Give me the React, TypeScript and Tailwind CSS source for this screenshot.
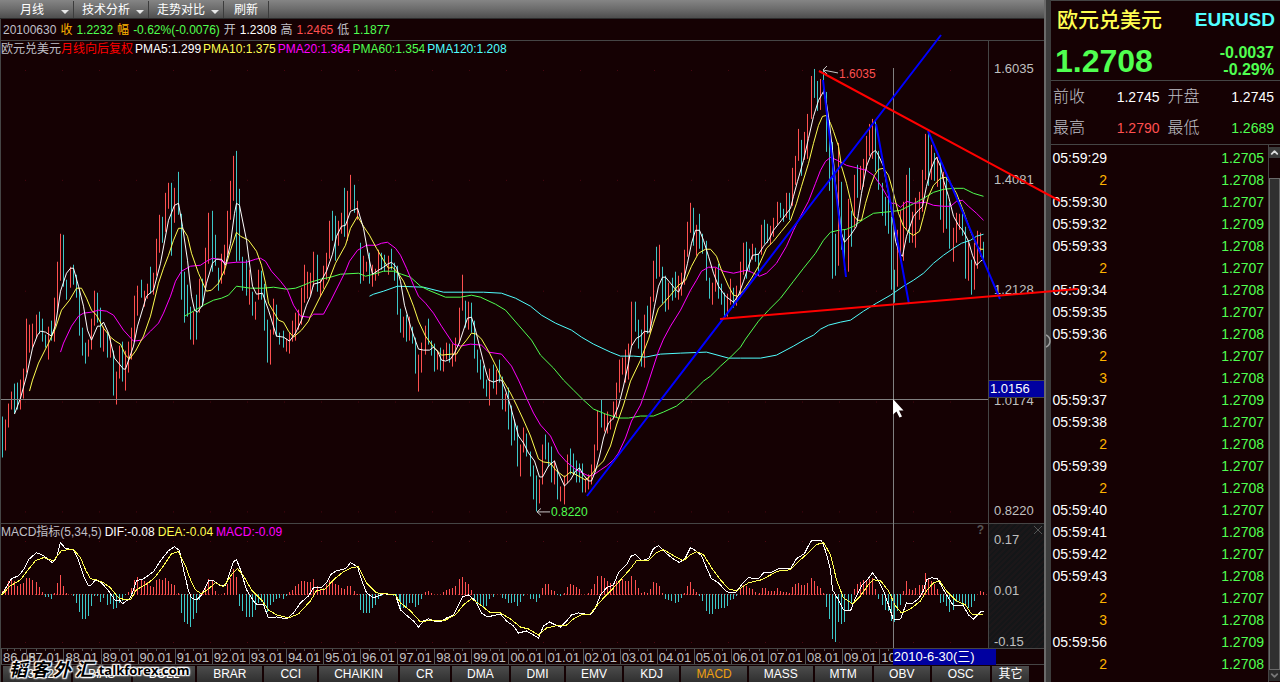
import { ChevronDown, ChevronUp } from "lucide-react";

type Block = { ox: number; oy: number; data: string };
type Pt = [number, number];

/* Chart data: each block holds points in thirds of a unit, counted from its own origin. */

const PRICE_BARS: Block[] = [
  {
    ox: 0,
    oy: 140,
    data: "d8,830,954 u16,840,933 u25,792,864 u34,756,810 d43,731,822 d52,729,809 u61,720,809 u70,687,777 u79,537,699 u88,555,638 u97,552,624 u109,525,594 d118,516,582 d127,537,606 d136,585,624 u145,561,660 d154,543,603 u163,474,606 u172,366,513 u181,282,423 d190,285,441 d199,420,480 u211,381,444 d220,375,435 d229,405,474 d238,447,588 d247,564,648 d256,609,672 u265,600,651 u274,537,630 u283,453,558 d292,459,549 d301,504,624 u310,561,636 d322,576,654 u331,594,654 d340,633,768 u349,696,795 u358,618,717 d367,606,726 u376,633,753 u385,606,699 u394,564,660 u403,468,606 u412,438,528 d424,420,474 u433,453,500 u442,432,477 d451,381,462 u460,399,465 u469,297,408 u478,225,339 d487,231,309 u496,159,276 u505,129,207 d514,128,348 u523,144,249 d535,96,226 d544,222,480 d553,396,549 d562,435,531 d571,501,600 u580,516,615 d589,465,600 u598,417,519 d607,417,501 u616,324,447 u625,219,372 d637,213,396 d646,285,378 d655,384,453 u664,342,432 u673,315,405 u682,213,345 u691,123,240 u700,48,183 d709,33,366 d718,147,362 d727,351,453 d739,360,468 u748,390,495 d757,456,528 u766,486,540 u775,390,480 d784,393,480 d793,432,573 d802,540,669 u811,570,675 u820,477,585 d829,495,591 d838,579,615 d850,573,624 u859,597,636 u868,579,642 u877,543,606 u886,519,603 u895,510,570 u904,444,555 u913,375,489 u922,396,477 u931,399,465 u940,336,441 d952,345,456 u961,420,471 u970,378,447 u979,339,420",
  },
  {
    ox: 310,
    oy: 160,
    data: "u58,183,297 d67,153,243 d76,168,303 u85,183,258 u94,159,222 d103,84,231 u112,93,243 u121,45,150 d133,75,159 u142,123,180 d151,249,372 u160,288,363 u169,306,336 d178,279,372 u187,315,381 u196,327,363 u205,270,348 d214,279,330 d223,285,335 u235,288,345 d244,267,330 d253,309,363 d262,318,465 d271,447,519 u280,470,534 d289,465,546 u298,471,543 d307,500,552 d316,534,642 u325,585,696 u334,549,639 u346,498,585 d355,477,555 d364,543,588 d373,552,636 u382,573,630 d391,564,633 u400,570,636 u409,549,600 d418,552,609 u427,552,621 u436,534,606 u448,444,552 u457,345,453 d466,423,504 u475,426,510 d484,429,519 d493,483,597 d502,570,639 d511,600,660 d520,618,687 d529,660,711 u538,627,738 d550,615,687 u559,630,705 d568,600,669 d577,651,750 u586,702,756 d595,684,810 d604,738,858 d613,780,843 d622,798,921 u631,855,951 u640,804,879 d649,822,891 d661,876,951 d670,918,1020 d679,948,1056 u688,960,1032 u697,855,975 d706,825,900 d715,850,920 d724,860,970 u733,903,975 d742,933,1020 u751,980,1026 u763,948,1035 u772,885,972 d781,867,945 d790,882,945 d799,903,969 d808,912,969 d817,912,999 u826,957,999 u835,945,990 u844,915,975 u853,855,936 u862,753,873 d874,720,804 u883,762,815 u892,756,822 u901,774,810 u910,726,780 u919,670,775 u928,600,700 u937,594,645 u946,570,669 u955,552,660 u964,426,558 d976,426,516",
  },
  {
    ox: 480,
    oy: 300,
    data: "d475,60,147 d484,90,201 u493,45,204 d502,18,102",
  },
  {
    ox: 600,
    oy: 60,
    data: "u151,710,819 u160,603,726 d169,561,657 u178,555,651 d187,621,732 d196,648,756 u205,670,750 d217,654,723 d226,636,714 u235,648,720 u244,640,708 u253,570,675 u262,486,591 u271,429,519 d280,444,558 u289,495,588 d298,462,567 d307,522,582 d319,543,663 d328,654,717 u337,669,735 u346,624,696 d355,612,717 d364,672,735 d373,699,777 u382,702,771 u391,657,735 d400,684,744 u409,678,738 u421,606,708 u430,549,645 d439,546,657 d448,567,633 u457,553,600 d466,564,606 d475,582,648 u484,495,585 d493,480,552 d502,492,549 u511,498,555 u520,474,531 u532,426,495 d541,429,474 d550,447,486 u559,400,474 d568,399,480 u577,324,438 u586,289,375 u595,207,303 d604,240,348 u613,216,300 u622,162,297 u634,48,177 d643,27,114 d652,63,153 u661,58,150 d670,27,102 d679,96,276 d688,180,393",
  },
  {
    ox: 780,
    oy: 30,
    data: "d157,336,747 d166,612,738 u175,339,708 d184,456,660 d193,600,720 u205,507,726 d214,543,651 u223,435,594 d232,405,504 u241,408,480 u250,387,470 u259,318,420 u268,282,378 u277,267,387 d286,272,426 d295,363,480 d307,458,558 d316,500,588 d325,480,612 d334,560,780 d343,720,820 u352,600,771 u361,540,690 u370,516,693 u379,435,600 d388,414,639 u397,546,640 u406,504,654 u418,486,570 u427,420,546 u436,312,450 d445,303,468 u454,345,450 d463,370,453 u472,380,470 d481,393,570 u490,426,609 d499,440,597 d508,520,657 u520,594,696 u529,549,639 u538,552,600 d547,552,618 d556,591,747 u565,640,753 d574,690,795 u583,640,780 u592,603,717 u601,609,680 d610,636,690",
  },
];

const PMA5: Block[] = [
  {
    ox: 0,
    oy: 140,
    data: "43,822 61,775 79,710 97,625 112,585 121,574 136,576 154,590 166,555 181,455 199,400 211,384 220,386 235,440 250,500 262,570 273,600 292,558 301,558 311,548 325,580 343,655 370,687 377,687 400,620 412,560 440,470 460,450 480,370 505,240 523,195 535,189 547,260 562,360 575,470 583,510 591,518 607,495 620,430 637,370 650,357 664,357 676,375 691,310 703,220 710,189 718,197 739,300 757,440 768,463 787,460 805,510 830,590 850,592 868,604 886,580 904,540 920,495",
  },
  {
    ox: 310,
    oy: 160,
    data: "0,410 10,372 30,368 50,335 66,283 80,230 94,200 106,197 122,153 142,145 160,205 175,290 187,342 205,330 220,322 232,312 245,308 258,322 270,365 283,435 300,500 313,535 325,568 340,572 358,572 370,563 382,575 395,600 407,605 420,598 433,580 448,548 460,510 472,475 484,471 496,510 511,570 525,630 535,660 550,668 565,661 575,661 586,690 601,740 625,830 640,850 655,880 672,905 688,953 697,951 715,920 733,905 745,940 763,980 780,960 795,935 808,925 820,945 835,965 845,965 857,935 868,890 880,835 895,790 910,775 925,740 940,680 955,610 965,560 978,535",
  },
  {
    ox: 600,
    oy: 60,
    data: "120,828 133,815 148,818 155,790 163,740 175,680 187,652 195,653 210,670 223,685 235,697 250,665 262,610 275,550 287,512 298,510 310,540 325,590 340,640 355,680 375,708 400,726 415,705 430,665 445,620 458,585 475,583 490,560 505,540 520,510 545,480 570,445 580,410 592,365 610,300 625,235 640,170 655,120 670,93 680,130 688,190 697,270 706,370 716,440 725,520 734,548 750,525 768,500 775,460 785,400 800,320 815,280 825,270 835,285 850,320 860,370 870,430 880,500",
  },
  {
    ox: 780,
    oy: 30,
    data: "345,635 358,670 367,678 380,620 400,560 415,540 427,530 440,470 450,420 462,392 470,381 480,410 490,450 505,500 520,560 535,585 550,605 565,635 578,675 590,707 600,695 609,688",
  },
];

const PMA10: Block[] = [
  {
    ox: 0,
    oy: 140,
    data: "88,755 97,720 115,670 145,610 165,565 185,510 208,480 230,444 245,446 260,475 275,510 290,525 310,565 330,593 345,605 360,612 375,645 388,657 405,635 430,590 452,530 475,430 490,385 505,345 520,300 535,265 547,265 562,290 575,340 595,400 618,455 635,452 655,430 672,390 690,330 709,278 720,288 745,300 770,335 785,375 795,430 805,490 835,540 850,548 865,575 880,593 905,570 925,545",
  },
  {
    ox: 310,
    oy: 160,
    data: "0,468 30,410 55,365 75,310 105,255 122,205 142,170 160,200 178,225 200,265 220,300 235,325 248,322 262,337 280,365 295,400 310,440 325,485 345,530 370,562 395,587 425,583 440,582 455,560 470,540 485,521 500,523 515,537 535,575 555,615 575,655 600,700 620,735 640,780 660,830 685,897 700,908 720,910 735,930 763,952 780,937 800,945 825,960 840,950 860,925 880,905 900,860 920,795 940,735 960,665",
  },
  {
    ox: 600,
    oy: 60,
    data: "120,900 145,838 160,790 175,745 190,730 210,705 235,675 255,660 275,620 295,580 315,568 330,568 350,590 365,630 385,680 400,707 412,710 430,690 455,655 475,620 500,565 520,545 545,515 570,480 590,430 605,380 625,310 640,250 655,195 668,170 679,165 690,190 700,215 715,260 725,320 738,370 750,420 760,465 772,482 783,480 795,430 810,380 822,345 835,328 850,325 865,345 880,400",
  },
  {
    ox: 780,
    oy: 30,
    data: "355,550 370,590 385,608 400,616 418,605 430,560 445,500 460,465 480,445 495,441 510,460 530,490 550,545 570,605 590,645 600,657 609,658",
  },
];

const PMA20: Block[] = [
  {
    ox: 0,
    oy: 140,
    data: "181,638 190,610 215,560 235,528 250,520 275,518 295,511 320,515 340,525 370,572 400,603 425,600 450,573 475,550 490,520 510,470 525,425 545,395 570,378 600,376 620,365 637,356 655,357 680,371 710,367 740,368 765,357 780,355 795,365 815,395 840,425 862,450 880,495 900,528 925,533",
  },
  {
    ox: 310,
    oy: 160,
    data: "0,472 10,463 41,463 60,425 90,365 105,335 118,305 142,270 170,257 200,257 215,250 232,247 255,265 270,285 290,325 310,375 325,410 345,430 370,460 395,500 430,553 450,558 480,553 515,557 535,578 575,584 605,620 625,660 650,715 670,760 690,797 720,830 745,880 770,908 800,930 835,948 850,945 870,930 890,920 910,900 925,880 945,835 965,785 990,735",
  },
  {
    ox: 600,
    oy: 60,
    data: "140,985 175,875 190,838 210,800 240,750 270,690 290,660 305,633 325,623 345,623 370,633 400,640 440,630 455,637 477,650 500,640 530,610 560,560 580,510 600,470 625,425 645,370 660,330 675,305 690,293 712,300 740,315 775,325 800,330 820,345 845,380 860,405 875,430",
  },
  {
    ox: 780,
    oy: 30,
    data: "345,520 362,532 380,515 400,520 435,517 460,527 490,528 510,530 530,515 548,510 565,530 590,550 609,570",
  },
];

const PMA60: Block[] = [
  {
    ox: 0,
    oy: 140,
    data: "553,530 580,515 610,495 640,480 665,476 685,465 710,438 750,445 790,445 820,441 860,448 885,446 910,435",
  },
  {
    ox: 310,
    oy: 160,
    data: "0,366 30,358 60,352 90,343 145,341 165,348 190,343 220,335 250,335 275,342 300,353 330,380 355,392 405,411 450,411 485,405 510,411 555,433 585,450 625,495 665,540 690,585 730,625 760,660 790,690 820,722 850,748 885,762 925,776 955,774",
  },
  {
    ox: 480,
    oy: 300,
    data: "480,350 521,350 550,337 590,320 620,295 650,265 670,243 690,230 720,200 750,173 780,142",
  },
  {
    ox: 600,
    oy: 60,
    data: "435,838 475,785 505,750 540,715 580,665 610,625 645,580 670,540 690,518 715,510 740,508 760,500 790,478 820,460 850,457 880,454",
  },
  {
    ox: 780,
    oy: 30,
    data: "360,540 390,525 430,505 460,488 490,477 520,475 550,475 580,490 609,500",
  },
];

const PMA120: Block[] = [
  {
    ox: 310,
    oy: 160,
    data: "178,409 190,403 220,395 262,380 340,382 400,397 520,397 575,400 615,415 660,438 695,465 735,490 785,510 815,533 850,552 900,577 930,588",
  },
  { ox: 480, oy: 300, data: "460,170 495,172 540,163 600,160 680,157 745,174" },
  {
    ox: 600,
    oy: 60,
    data: "420,896 480,894 530,885 580,858 615,838 640,825 660,808 685,795 720,787 750,780 790,755 830,730",
  },
  {
    ox: 780,
    oy: 30,
    data: "330,795 370,770 400,750 430,730 460,700 490,677 520,655 545,640 570,632 590,620 609,613",
  },
];

const MACD_BARS: Block[] = [
  {
    ox: 0,
    oy: 520,
    data: "u8,215 u16,211 u25,185 u34,180 u43,185 u52,200 u61,195 u70,191 u79,177 u88,178 u97,182 u109,190 u118,204 u127,220 d136,234 d145,234 d154,240 u163,222 u172,192 u181,168 u190,201 u199,222 d220,231 d229,252 d238,279 d247,300 d256,300 d265,291 d274,261 d283,232 d292,231 d301,249 d310,237 d322,258 d331,255 d340,270 d349,266 d358,252 d367,246 d376,229 u385,220 u394,207 u403,183 u412,174 u424,180 u433,186 u442,190 u451,201 u460,204 u469,182 u478,180 u487,184 u496,177 u505,186 u514,195 u523,198 u535,222 d544,282 d553,309 d562,316 d571,324 d580,300 d589,282 d598,243 u607,216 u616,201 u625,180 u637,185 u646,216 u673,222 u682,195 u691,177 u700,150 u709,175 d718,261 d727,276 d739,294 d748,294 d757,294 d766,273 d775,252 d784,249 d793,261 d802,279 d811,258 d820,249 d829,240 d838,237 d850,240 d859,231 u868,219 u877,212 u886,201 u895,195 u904,186 u913,186 u922,189 u931,189 u940,180 u952,200 u961,210 u970,208 u979,195 u988,184 u997,183 u1006,195 u1015,198 u1024,206 u1033,210 u1042,202 u1051,201 u1063,215 u1072,225 d1081,273 d1090,282 d1099,282 d1108,282 d1117,267 d1126,258 d1135,240 d1144,231 d1180,230 d1189,234 d1198,246",
  },
  {
    ox: 400,
    oy: 520,
    data: "d1,270 d10,267 d19,267 d28,252 d37,252 d46,264 d55,258 d64,240 u76,219 u85,216 u94,222 u130,219 u139,213 u148,211 u157,207 u166,201 u178,180 u187,174 u196,189 u205,195 u214,213 d223,243 d232,255 d241,261 d250,267 d259,261 d268,240 d280,234 d307,237 d316,240 d325,252 d334,252 d343,249 d352,261 d361,249 d370,231 d391,240 d400,240 d409,249 d418,237 u427,207 u436,195 u445,195 u454,213 u463,216 d472,228 d481,231 u493,222 u502,205 u511,195 u520,198 u529,204 u538,210 u565,222 u574,210 u583,195 u592,171 u604,171 u613,177 u622,186 u631,192 u640,195 u649,186 u658,183 u667,180 u676,185 u685,185 u694,171 u706,183 u715,207 u724,222 u733,219 u742,222 u751,210 u760,189 u769,192 u778,201 u787,222 d796,240 d805,243 d814,246 d826,252 d835,249 d844,236 u853,222 u862,201 u871,189 u880,210 u889,220 d898,231 d907,246 d919,276 d928,285 d937,285 d946,270 d955,270 d964,267 d973,266 d982,261 d991,243 d1000,240 d1009,231 u1021,207 u1030,198 u1039,200 u1048,207 u1057,210 u1066,219 u1078,222 u1087,207 u1096,207 u1105,216 u1114,216 u1123,216 u1132,207",
  },
  {
    ox: 780,
    oy: 520,
    data: "u1,216 u10,218 u19,219 u28,222 u37,204 u46,195 u55,192 u64,198 u73,198 u82,192 u94,177 u103,186 u112,201 u121,207 u130,222 d139,264 d148,300 d157,356 d166,366 d175,309 d184,315 d193,309 d205,276 d214,255 u223,210 u232,195 u241,188 u250,183 u259,183 u268,180 u277,177 u286,210 d295,240 d307,258 d316,272 d325,276 d334,306 d343,308 d352,275 d361,258 u370,216 u379,186 u388,210 u397,212 u406,207 u418,198 u427,198 u436,162 u445,180 u454,186 u463,195 u472,210 d481,252 d490,249 d499,261 d508,279 d520,273 d529,249 d538,246 d547,258 d556,261 d565,268 d574,264 d583,246 u601,216 u610,219",
  },
];

const DIF: Block[] = [
  {
    ox: 0,
    oy: 520,
    data: "5,225 35,177 55,170 70,150 85,122 110,100 130,110 145,122 157,129 170,115 182,71 195,87 220,92 232,115 250,170 265,198 275,197 287,180 305,190 325,215 347,245 358,240 368,253 390,235 410,185 430,177 460,158 480,125 505,93 523,83 537,95 550,150 565,215 575,235 590,240 605,225 625,184 640,185 660,200 675,198 690,155 700,128 709,121 720,150 740,210 765,253 790,255 805,295 830,291 860,298 880,280 900,250 925,230 940,205 965,205 978,190 990,167 1010,155 1035,148 1052,130 1072,141 1085,180 1100,220 1120,234 1150,224 1185,227",
  },
  {
    ox: 400,
    oy: 520,
    data: "0,270 25,293 40,305 55,322 70,305 85,297 100,305 120,307 140,295 160,285 175,255 187,232 205,226 225,245 245,280 262,292 300,283 320,305 340,320 355,340 380,333 400,345 415,356 430,320 447,308 465,317 482,323 500,305 515,285 535,280 570,287 585,265 600,225 620,205 640,197 655,160 680,135 695,108 706,105 725,125 745,118 760,88 775,79 795,100 815,115 837,131 855,115 870,86 885,93 905,110 920,145 935,178 955,190 980,217 1005,220 1025,195 1045,175 1075,177 1090,161 1110,160 1135,148",
  },
  {
    ox: 780,
    oy: 520,
    data: "0,148 32,148 50,118 73,103 85,80 95,65 125,65 135,95 150,150 158,210 175,240 190,270 210,273 225,235 245,200 262,180 277,160 295,185 310,215 325,255 340,300 362,297 378,250 395,253 415,237 430,215 440,180 455,175 472,177 490,210 505,235 520,258 550,260 565,285 580,298 600,277 609,277",
  },
];

const DEA: Block[] = [
  {
    ox: 0,
    oy: 520,
    data: "5,225 30,200 60,180 80,157 105,125 130,114 160,123 185,95 205,91 220,92 240,115 255,150 272,178 290,180 310,190 330,205 355,235 375,242 390,240 410,210 445,190 465,172 490,140 515,103 535,97 555,140 570,180 585,210 605,223 625,208 645,190 670,201 695,165 712,148 730,170 755,210 785,240 805,270 830,287 865,296 895,282 930,245 950,215 975,207 1000,180 1030,157 1055,144 1075,143 1100,190 1130,220 1185,227",
  },
  {
    ox: 400,
    oy: 520,
    data: "0,250 30,275 60,308 95,302 130,303 165,285 190,255 214,237 240,255 270,280 300,280 330,297 360,323 385,328 415,347 440,325 465,318 495,319 520,297 545,287 570,284 590,260 615,230 640,205 665,178 690,148 710,125 745,123 770,100 790,91 820,110 850,123 870,105 890,97 910,105 935,145 960,180 985,207 1010,214 1045,190 1085,180 1130,157",
  },
  {
    ox: 780,
    oy: 520,
    data: "0,154 32,151 60,122 85,100 110,77 130,71 150,105 170,180 190,235 217,254 240,230 262,200 280,180 300,185 325,215 345,260 365,280 390,267 420,245 440,215 460,190 477,185 500,215 530,245 555,255 575,282 590,286 609,283",
  },
];

const RED = "#ff5050";
const TEAL = "#3cc8c8";

function toPath(blocks: Block[]): string {
  const pts: Pt[] = blocks.flatMap((b) =>
    b.data.split(" ").map((p): Pt => {
      const [x, y] = p.split(",").map(Number);
      return [Math.floor(b.ox + x / 3) + 0.5, Math.floor(b.oy + y / 3) + 0.5];
    }),
  );
  return "M" + pts.map(([x, y]) => `${x} ${y}`).join("L");
}

function barPath(blocks: Block[], kind: "u" | "d", base?: number): string {
  return blocks
    .flatMap((b) =>
      b.data
        .split(" ")
        .filter((s) => s[0] === kind)
        .map((s) => {
          const [x, a, c] = s.slice(1).split(",").map(Number);
          const px = Math.floor(b.ox + x / 3) + 0.5;
          const y1 = Math.round(b.oy + a / 3);
          const y2 = base ?? Math.round(b.oy + c / 3);
          return `M${px} ${y1}V${y2}`;
        }),
    )
    .join("");
}

const YEARS = Array.from({ length: 24 }, (_, i) => String((87 + i) % 100).padStart(2, "0") + ".01");
const GRID_X = Array.from({ length: 26 }, (_, i) => 25 + i * 37);

function GridDots({ ys }: { ys: number[] }) {
  return (
    <path
      d={ys.flatMap((y) => GRID_X.map((x) => `M${x} ${y}h1`)).join("")}
      transform="translate(0 0.5)"
      stroke="#4a0812"
      strokeWidth="1"
      shapeRendering="crispEdges"
    />
  );
}

function Toolbar() {
  return (
    <div className="flex h-[19px] shrink-0 border-b border-[#2c2c2c] bg-gradient-to-b from-[#858585] via-[#6c6c6c] to-[#4e4e4e] pt-px text-xs leading-[18px] text-white">
      <MenuButton label="月线" className="w-[74px] pl-5" />
      <MenuButton label="技术分析" className="w-[75px] pl-2" />
      <MenuButton label="走势对比" className="w-[75px] pl-2" />
      <button className="w-[45px] border-r border-[#3c3c3c]">刷新</button>
    </div>
  );
}

function MenuButton({ label, className }: { label: string; className: string }) {
  return (
    <button
      aria-haspopup="menu"
      className={`flex items-center justify-between border-r border-[#3c3c3c] pr-1 ${className}`}
    >
      {label}
      <svg viewBox="0 0 8 4" className="mt-1 h-1 w-2" aria-hidden="true">
        <path d="M0 0H8L4 4Z" fill="#e8e8e8" />
      </svg>
    </button>
  );
}

function QuoteLine() {
  return (
    <div className="flex h-[22px] shrink-0 items-center gap-1 border-b border-[#454545] pl-0.5 text-xs whitespace-nowrap text-[#c0c0c8]">
      <span>20100630</span>
      <span className="text-[#ffb400]">收</span>
      <span className="text-[#50ff50]">1.2232</span>
      <span className="text-[#ffb400]">幅</span>
      <span className="text-[#50ff50]">-0.62%(-0.0076)</span>
      <span>开</span>
      <span className="text-white">1.2308</span>
      <span>高</span>
      <span className="text-[#ff5050]">1.2465</span>
      <span>低</span>
      <span className="text-[#50ff50]">1.1877</span>
    </div>
  );
}

function PriceChart() {
  return (
    <section className="flex min-h-0 flex-[484] border-b border-[#454545]">
      <div className="relative min-w-0 flex-1">
        <div className="absolute top-0 left-0 flex gap-0.5 text-xs leading-4 whitespace-nowrap text-[#c0c0c8]">
          <span>
            欧元兑美元<span className="text-[#ff0000]">月线向后复权</span>
          </span>
          <span className="text-white">PMA5:1.299</span>
          <span className="text-[#ffff50]">PMA10:1.375</span>
          <span className="text-[#ff00ff]">PMA20:1.364</span>
          <span className="text-[#50ff50]">PMA60:1.354</span>
          <span className="text-[#50ffff]">PMA120:1.208</span>
        </div>
        <svg viewBox="1 41 987 483" preserveAspectRatio="none" className="block h-full w-full">
          <GridDots ys={[70, 180, 291, 402, 512]} />
          <g fill="none" strokeWidth="1" shapeRendering="crispEdges">
            <path d={barPath(PRICE_BARS, "u")} stroke={RED} />
            <path d={barPath(PRICE_BARS, "d")} stroke={TEAL} />
            <path d={toPath(PMA120)} stroke="#50ffff" />
            <path d={toPath(PMA60)} stroke="#50ff50" />
            <path d={toPath(PMA20)} stroke="#ff00ff" />
            <path d={toPath(PMA10)} stroke="#ffff50" />
            <path d={toPath(PMA5)} stroke="#ffffff" />
          </g>
          <path
            d="M838 73L823 70M827 66L823 70L827 74M550 512.5H537M541 509L537 512.5L541 516"
            fill="none"
            stroke="#c8c8c8"
          />
          <text x="839" y="78" fontSize="12" fill={RED}>
            1.6035
          </text>
          <text x="551" y="517" fontSize="12" fill="#50ff50">
            0.8220
          </text>
        </svg>
      </div>
      <div className="relative flex w-14 shrink-0 flex-col justify-between border-l border-[#454545] pt-5 pb-1 pl-[5px] text-[13px] leading-4 text-[#c0c0c0]">
        <span>1.6035</span>
        <span>1.4081</span>
        <span>1.2128</span>
        <span>1.0174</span>
        <span>0.8220</span>
        <div className="absolute top-[70.3%] left-0 h-[18px] w-full border-y border-[#454545] bg-[#0000a0] pl-px leading-4 text-white">
          1.0156
        </div>
      </div>
    </section>
  );
}

function MacdChart() {
  return (
    <section className="flex min-h-0 flex-[124] border-b border-[#454545]">
      <div className="relative min-w-0 flex-1">
        <div className="absolute top-0 left-0 flex gap-[3px] text-xs leading-4 whitespace-nowrap text-[#c0c0c8]">
          <span>MACD指标(5,34,5)</span>
          <span className="text-white">DIF:-0.08</span>
          <span className="text-[#ffff50]">DEA:-0.04</span>
          <span className="text-[#ff00ff]">MACD:-0.09</span>
        </div>
        <button className="absolute top-0 right-1 text-xs leading-3 font-bold text-[#555555]">?</button>
        <svg viewBox="1 525 987 123" preserveAspectRatio="none" className="block h-full w-full">
          <GridDots ys={[542, 642]} />
          <g fill="none" strokeWidth="1" shapeRendering="crispEdges">
            <path d="M2 595.5H988" stroke="#a02828" strokeDasharray="1 2" />
            <path d={barPath(MACD_BARS, "u", 596)} stroke={RED} />
            <path d={barPath(MACD_BARS, "d", 595)} stroke={TEAL} />
            <path d={toPath(DIF)} stroke="#ffffff" />
            <path d={toPath(DEA)} stroke="#ffff50" />
          </g>
        </svg>
      </div>
      <div className="relative flex w-14 shrink-0 flex-col justify-between border-l border-[#454545] bg-[repeating-linear-gradient(135deg,#1b1719_0px,#1b1719_2px,#141618_2px,#141618_4px)] pt-2 pl-[5px] text-[13px] leading-4 text-[#c0c0c0]">
        <span>0.17</span>
        <span>0.01</span>
        <span className="-mb-0.5">-0.15</span>
        <button aria-label="关闭" className="absolute top-0.5 right-0.5 size-2">
          <svg viewBox="0 0 8 8" className="size-2">
            <path d="M0 0L8 8M8 0L0 8" stroke="#555555" fill="none" />
          </svg>
        </button>
      </div>
    </section>
  );
}

function DateCell({ label, className }: { label: string; className: string }) {
  return (
    <div className={`min-w-0 border-l border-[#555555] ${className}`}>
      <div className="flex h-0.5 justify-evenly">
        <i className="w-px bg-[#555555]" />
        <i className="w-px bg-[#555555]" />
        <i className="w-px bg-[#555555]" />
      </div>
      <div className="pl-px leading-[14px]">{label}</div>
    </div>
  );
}

function DateAxis() {
  return (
    <div className="relative flex h-4 shrink-0 border-b border-[#454545] text-[13px] text-[#c0c0c0]">
      <DateCell label="86.05" className="flex-[25]" />
      {YEARS.map((y) => (
        <DateCell key={y} label={y} className="flex-[37]" />
      ))}
      <div className="flex-[131]" />
      <div className="absolute top-0 left-[85.5%] h-4 w-[103px] bg-[#0000a0] pl-px text-[13px] leading-4 whitespace-nowrap text-white">
        2010-6-30(三)
      </div>
    </div>
  );
}

const TABS: [string, string][] = [
  ["B3612", "flex-[70]"],
  ["BIAS", "flex-[60]"],
  ["BOLL", "flex-[65]"],
  ["BRAR", "flex-[67]"],
  ["CCI", "flex-[55]"],
  ["CHAIKIN", "flex-[81]"],
  ["CR", "flex-[52]"],
  ["DMA", "flex-[59]"],
  ["DMI", "flex-[55]"],
  ["EMV", "flex-[58]"],
  ["KDJ", "flex-[57]"],
  ["MACD", "flex-[68]"],
  ["MASS", "flex-[66]"],
  ["MTM", "flex-[59]"],
  ["OBV", "flex-[58]"],
  ["OSC", "flex-[60]"],
  ["其它", "flex-[39]"],
];

function IndicatorTabs() {
  return (
    <nav className="relative flex h-[17px] shrink-0 pt-px pl-0.5 text-xs leading-4">
      {TABS.map(([name, width]) => (
        <button
          key={name}
          className={`min-w-0 border-r-2 border-[#150103] bg-gradient-to-b from-[#4c4c4c] to-[#303030] ${width} ${
            name === "MACD" ? "text-[#f0a010]" : "text-white"
          }`}
        >
          {name}
        </button>
      ))}
      <div className="flex-[13]" />
      <div className="pointer-events-none absolute bottom-1 left-2 flex items-end font-bold whitespace-nowrap text-black [text-shadow:0_0_1px_#fff,1px_1px_1px_#fff,-1px_-1px_1px_#fff,1px_-1px_1px_#fff,-1px_1px_1px_#fff,0_0_3px_#fff,0_0_3px_#fff]">
        <span className="flex gap-1 font-['Noto_Sans_CJK_SC'] text-lg leading-5 italic">
          <span>韬</span>
          <span>客</span>
          <span>外</span>
          <span>汇</span>
        </span>
        <span className="pl-0.5 font-['Open_Sans'] text-[13px] leading-4">.talkforex.com</span>
      </div>
    </nav>
  );
}

const TICKS: [string, string][] = [
  ["05:59:29", "1.2705"],
  ["2", "1.2708"],
  ["05:59:30", "1.2707"],
  ["05:59:32", "1.2709"],
  ["05:59:33", "1.2708"],
  ["2", "1.2707"],
  ["05:59:34", "1.2708"],
  ["05:59:35", "1.2707"],
  ["05:59:36", "1.2708"],
  ["2", "1.2707"],
  ["3", "1.2708"],
  ["05:59:37", "1.2709"],
  ["05:59:38", "1.2707"],
  ["2", "1.2708"],
  ["05:59:39", "1.2707"],
  ["2", "1.2708"],
  ["05:59:40", "1.2707"],
  ["05:59:41", "1.2708"],
  ["05:59:42", "1.2707"],
  ["05:59:43", "1.2708"],
  ["2", "1.2707"],
  ["3", "1.2708"],
  ["05:59:56", "1.2709"],
  ["2", "1.2708"],
];

function QuotePanel() {
  return (
    <aside className="flex w-[229px] shrink-0 flex-col border-t border-[#454545]">
      <header className="h-20 shrink-0 border-b border-[#454545] pr-[5px]">
        <div className="flex h-9 items-center justify-between pt-0.5 pl-1.5">
          <h1 className="text-[21px] leading-6 font-medium text-[#ffff50]">欧元兑美元</h1>
          <span className="text-[19px] leading-6 font-bold text-[#50ffff]">EURUSD</span>
        </div>
        <div className="flex items-center justify-between pr-px pl-1 font-bold text-[#50ff50]">
          <strong className="pt-1 text-[32px] leading-10">1.2708</strong>
          <div className="pt-1 text-right text-base leading-[17px]">
            <div>-0.0037</div>
            <div>-0.29%</div>
          </div>
        </div>
      </header>
      <dl className="grid h-16 shrink-0 grid-cols-[32px_1fr_40px_1fr] items-center border-b border-[#454545] pr-1.5 pl-0.5 text-right text-sm text-white">
        <dt className="text-left text-base font-light text-[#c0c0c8]">前收</dt>
        <dd>1.2745</dd>
        <dt className="pl-2 text-left text-base font-light text-[#c0c0c8]">开盘</dt>
        <dd>1.2745</dd>
        <dt className="text-left text-base font-light text-[#c0c0c8]">最高</dt>
        <dd className="text-[#ff5050]">1.2790</dd>
        <dt className="pl-2 text-left text-base font-light text-[#c0c0c8]">最低</dt>
        <dd className="text-[#50ff50]">1.2689</dd>
      </dl>
      <div className="flex min-h-0 flex-1">
        <div className="min-w-0 flex-1 overflow-hidden pt-0.5">
          <table className="w-full text-sm">
            <tbody>
              {TICKS.map(([time, price], i) => (
                <tr key={i} className="h-[22px]">
                  <td
                    className={`w-14 p-0 text-right leading-[22px] ${
                      time.length > 1 ? "text-white" : "text-[#ffb400]"
                    }`}
                  >
                    {time}
                  </td>
                  <td className="p-0 pr-1 text-right leading-[22px] text-[#50ff50]">{price}</td>
                </tr>
              ))}
            </tbody>
          </table>
        </div>
        <div className="flex w-3 shrink-0 flex-col items-stretch border-l border-[#454545]">
          <button aria-label="向上" className="mt-0.5 h-[11px] bg-[#3a3a3a] text-[#dddddd]">
            <ChevronUp className="h-[11px] w-[11px]" strokeWidth={4} />
          </button>
          <div className="h-5" />
          <div className="flex-1 border border-[#6a6a6a] bg-[#303030]" />
          <button aria-label="向下" className="mb-px h-[11px] bg-[#2a2a2a] text-[#777777]">
            <ChevronDown className="h-[11px] w-[11px]" strokeWidth={4} />
          </button>
        </div>
      </div>
    </aside>
  );
}

function DrawingLayer() {
  return (
    <svg
      viewBox="0 0 1280 682"
      preserveAspectRatio="none"
      className="pointer-events-none absolute inset-0 h-full w-full"
      aria-hidden="true"
    >
      <path d="M1 399.5H988M893.5 68V648" stroke="#808080" shapeRendering="crispEdges" />
      <g fill="none" strokeWidth="2">
        <path d="M587 496L941 35M823 80L846 277M876 124L909 304M928 131L1000 299" stroke="#0000ff" />
        <path d="M819 71L1060 201M720 319L1078 289" stroke="#ff0000" />
      </g>
      <path d="M893 399V414.500L896.500 411.500L899.500 417.500L902 416.500L899 410.500H903.500Z" fill="#ffffff" />
    </svg>
  );
}

export default function App() {
  return (
    <main className="relative flex h-screen overflow-hidden bg-[#150103] font-['Liberation_Sans','Noto_Sans_CJK_SC',sans-serif]">
      <div className="flex min-w-0 flex-1 flex-col">
        <Toolbar />
        <div className="flex min-h-0 flex-1 flex-col border-l border-[#454545]">
          <QuoteLine />
          <PriceChart />
          <MacdChart />
          <DateAxis />
          <IndicatorTabs />
        </div>
      </div>
      <div className="flex w-[7px] shrink-0 items-center border-l-2 border-[#6a6a6a] bg-[#3c3c3c]">
        <svg viewBox="0 0 5 14" className="h-3.5 w-[5px]" aria-hidden="true">
          <path d="M0 1Q4 3 4 7Q4 11 0 13" fill="none" stroke="#a0a0a0" strokeWidth="1.500" />
        </svg>
      </div>
      <QuotePanel />
      <DrawingLayer />
    </main>
  );
}
